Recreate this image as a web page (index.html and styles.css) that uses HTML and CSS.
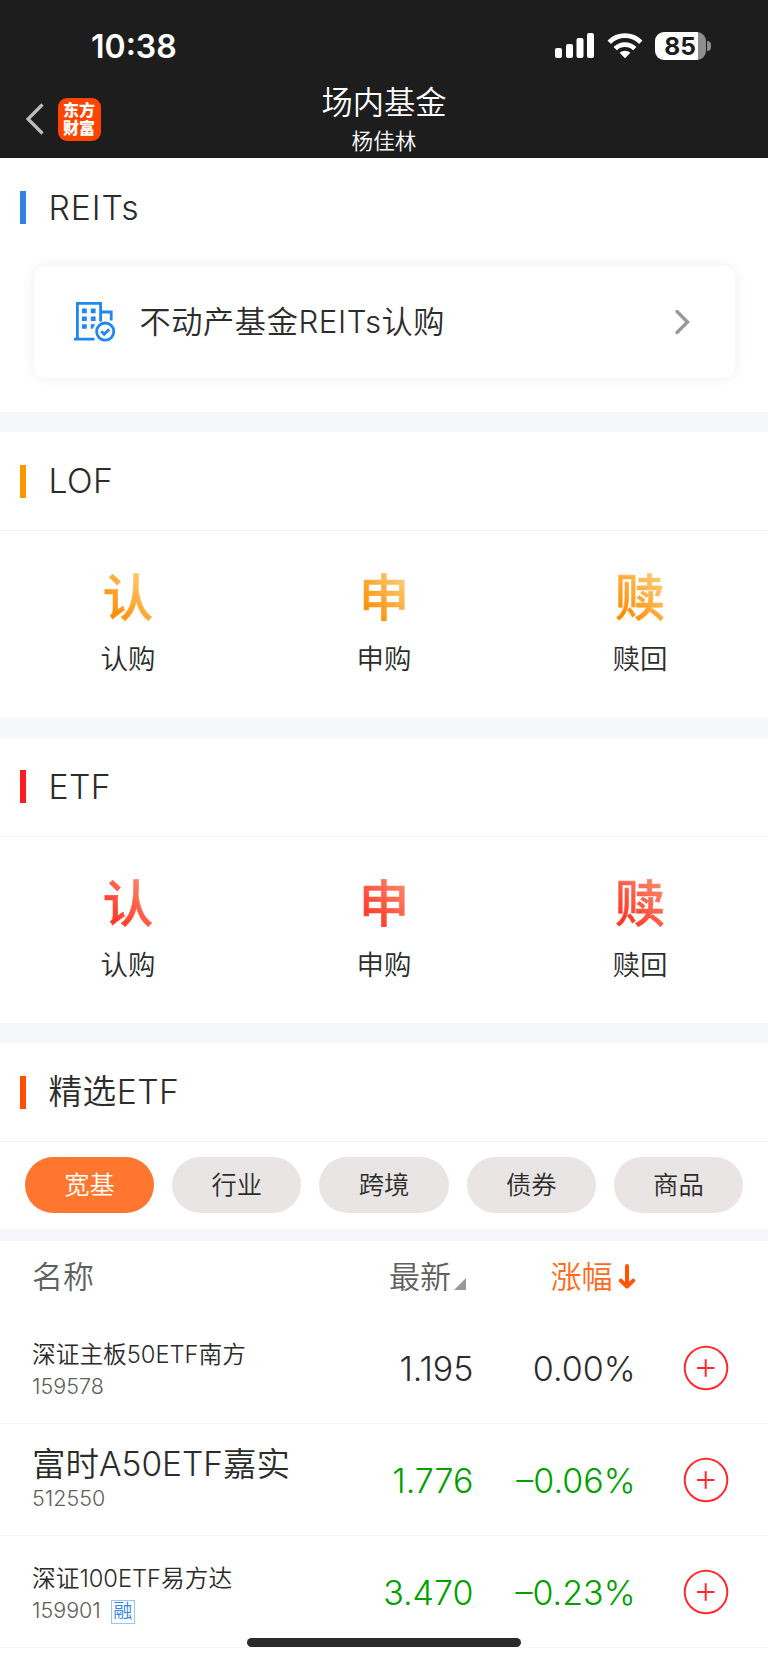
FILE: index.html
```
<!DOCTYPE html>
<html lang="zh-CN">
<head>
  <meta charset="UTF-8" />
  <meta name="viewport" content="width=device-width, initial-scale=1.0"/>
  <title>场内基金</title>
  <link rel="stylesheet" href="styles.css">
</head>
<body>

  <header class="header">
    <!-- Status bar -->
    <div class="status">
      <span class="time">10:38</span>
      <div class="status-icons">
        <svg class="signal" width="40" height="26" viewBox="0 0 40 26" fill="#fff">
          <rect x="0" y="15" width="7" height="10" rx="2"/>
          <rect x="11" y="11" width="7" height="14" rx="2"/>
          <rect x="21.5" y="5" width="7" height="20" rx="2"/>
          <rect x="32" y="0" width="7" height="25" rx="2"/>
        </svg>
        <svg class="wifi" width="36" height="26" viewBox="0 0 36 26">
          <g fill="none" stroke="#fff" stroke-width="4.8">
            <path d="M2.2 9.2A22.5 22.5 0 0 1 33.8 9.2"/>
            <path d="M8.2 15.6A14 14 0 0 1 27.8 15.6"/>
          </g>
          <path d="M18 25.2L12.6 19.8A7.8 7.8 0 0 1 23.4 19.8Z" fill="#fff"/>
        </svg>
        <div class="battery"><span class="battery-body">85</span><span class="battery-cap"></span></div>
      </div>
    </div>
    <!-- Nav bar -->
    <div class="nav">
      <div class="nav-left">
        <svg width="20" height="34" viewBox="0 0 20 34" fill="none" stroke="#bdbdbd" stroke-width="3.2">
          <path d="M17.5 2.5L3 17L17.5 31.5"/>
        </svg>
        <div class="logo"><span>东方</span><span>财富</span></div>
      </div>
      <div class="nav-title">
        <h1>场内基金</h1>
        <p>杨佳林</p>
      </div>
    </div>
  </header>

  <section class="section reits">
    <h2 class="title blue">REITs</h2>
    <a class="card">
      <svg width="42" height="42" viewBox="0 0 42 42" fill="none" stroke="#1e87f0" stroke-width="2.8">
        <path d="M3.4 37V2.3H26.6V20.5M26.6 11H37.2V19.5M0 38.2H20.5"/>
        <g fill="#1e87f0" stroke="none">
          <path d="M8 7.6h4.8v4.6H8zM16.8 7.6h4.8v4.6h-4.8zM8 15.4h4.8v4.6H8zM16.8 15.4h4.8v4.6h-4.8zM8 23.2h4.8v4.6H8zM16.8 23.2h4.4l-2.6 4.6h-1.8z"/>
        </g>
        <circle cx="31.2" cy="30.6" r="8.6"/>
        <path d="M27.2 30.2l3 3 5-5"/>
      </svg>
      <span class="card-text">不动产基金REITs认购</span>
      <svg class="arrow" width="16" height="28" viewBox="0 0 16 28" fill="none" stroke="#999" stroke-width="3.4" stroke-linecap="round">
        <path d="M3 3.5L13.5 14L3 24.5"/>
      </svg>
    </a>
  </section>

  <section class="section">
    <h2 class="title orange line">LOF</h2>
    <div class="menu lof">
      <div class="menu-item"><b>认</b><span>认购</span></div>
      <div class="menu-item"><b>申</b><span>申购</span></div>
      <div class="menu-item"><b>赎</b><span>赎回</span></div>
    </div>
  </section>

  <section class="section">
    <h2 class="title red line">ETF</h2>
    <div class="menu etf">
      <div class="menu-item"><b>认</b><span>认购</span></div>
      <div class="menu-item"><b>申</b><span>申购</span></div>
      <div class="menu-item"><b>赎</b><span>赎回</span></div>
    </div>
  </section>

  <section class="section picks">
    <h2 class="title deep line">精选ETF</h2>
    <div class="tabs">
      <span class="tab active">宽基</span>
      <span class="tab">行业</span>
      <span class="tab">跨境</span>
      <span class="tab">债券</span>
      <span class="tab">商品</span>
    </div>
  </section>

  <!-- Fund list -->
  <div class="list">
    <div class="list-head">
      <span>名称</span>
      <span class="col-price">最新<i class="corner"></i></span>
      <span class="col-change">涨幅<svg width="18" height="27" viewBox="0 0 18 27" fill="none" stroke="#ff5500" stroke-width="4" stroke-linecap="round" stroke-linejoin="round"><path d="M9 3V23M2.8 17.6L9 23.5L15.2 17.6"/></svg></span>
    </div>

    <div class="row">
      <div class="fund"><span class="name">深证主板50ETF南方</span><span class="code">159578</span></div>
      <span class="num">1.195</span>
      <span class="num">0.00%</span>
      <svg class="add" width="46" height="46" viewBox="0 0 46 46"><circle cx="23" cy="23" r="21.3"/><path d="M14 23H31.5M22.7 14.2V31.8"/></svg>
    </div>
    <div class="row down">
      <div class="fund"><span class="name big">富时A50ETF嘉实</span><span class="code">512550</span></div>
      <span class="num">1.776</span>
      <span class="num">–0.06%</span>
      <svg class="add" width="46" height="46" viewBox="0 0 46 46"><circle cx="23" cy="23" r="21.3"/><path d="M14 23H31.5M22.7 14.2V31.8"/></svg>
    </div>
    <div class="row down">
      <div class="fund"><span class="name">深证100ETF易方达</span><span class="code">159901<em class="tag">融</em></span></div>
      <span class="num">3.470</span>
      <span class="num">–0.23%</span>
      <svg class="add" width="46" height="46" viewBox="0 0 46 46"><circle cx="23" cy="23" r="21.3"/><path d="M14 23H31.5M22.7 14.2V31.8"/></svg>
    </div>
  </div>

  <div class="home-bar"></div>

</body>
</html>
```

FILE: styles.css
```
/* Reset & Base */
* { margin:0; padding:0; box-sizing:border-box; }
body {
  font-family:Inter,"Noto Sans CJK SC",sans-serif;
  font-weight:350;
  color:#2c2c2c;
  background:#fff;
  height:1662px;
  overflow:hidden;
}
svg { display:block; flex:none; }

/* Header */
.header { height:158px; background:#1d1d1d; color:#fff; }
.status {
  height:80px; padding:12px 57.5px 0 91px;
  display:flex; align-items:center; justify-content:space-between;
}
.time { padding-top:2px; font-size:32px; font-weight:600; line-height:66px; }
.status-icons { display:flex; align-items:center; }
.wifi { margin:0 12px; }
.battery { display:flex; align-items:center; gap:1px; }
.battery-body {
  width:51px; height:28px; border-radius:9px;
  background:linear-gradient(90deg,#fff 84%,#8e8e8e 84%);
  color:#1d1d1d; font-size:24.5px; font-weight:700;
  line-height:28px; text-align:center;
}
.battery-cap { width:4px; height:10px; border-radius:0 5px 5px 0; background:#8e8e8e; }

.nav {
  height:78px; padding:0 25px;
  display:grid; grid-template-columns:1fr auto 1fr;
}
.nav-left { display:flex; align-items:center; gap:12.5px; }
.logo {
  width:43px; height:43px; border-radius:9px; background:#ff4400;
  display:flex; flex-direction:column; justify-content:center;
  font-size:16px; font-weight:900; line-height:18px; text-align:center;
}
.nav-title { text-align:center; }
.nav-title h1 { font-size:31.3px; font-weight:350; line-height:46px; }
.nav-title p { font-size:21.6px; line-height:30px; }

/* Sections */
.section { height:305.5px; border-bottom:20px solid #f6f7fa; }
.title {
  height:98px; padding-left:20px;
  display:flex; align-items:center; gap:22.5px;
  font-size:33.7px; font-weight:350; line-height:40px; letter-spacing:.4px;
}
.title::before { content:""; width:6px; height:33px; background:#3480e4; }
.title.orange::before { background:#ff9800; }
.title.red::before { background:#fb1d22; }
.title.deep::before { background:#ff5000; }
.line { height:99px; border-bottom:1px solid #f3f4f6; }

/* REITs card */
.reits { height:274px; }
.reits .title { height:99px; letter-spacing:.9px; }
.card {
  height:112px; margin:9px 33.5px 0; padding:0 45px 0 40px;
  display:flex; align-items:center;
  border-radius:11px;
  box-shadow:0 0 14px rgba(0,0,0,0.07);
}
.card-text { margin-left:24px; font-size:31.2px; line-height:42px; letter-spacing:.6px; }
.arrow { margin-left:auto; }

/* LOF / ETF menus */
.menu { display:grid; grid-template-columns:repeat(3,1fr); padding-top:37px; }
.menu-item { display:flex; flex-direction:column; align-items:center; }
.menu-item b {
  font-size:50.5px; font-weight:500; line-height:60px;
  color:transparent; -webkit-background-clip:text; background-clip:text;
}
.menu-item span { margin-top:11px; font-size:27.5px; line-height:40px; }
.lof b { background-image:linear-gradient(45deg,#ff8c00 20%,#ffcf7d 90%); -webkit-text-stroke:.6px transparent; }
.etf b { background-image:linear-gradient(45deg,#ff3526 20%,#ff8a6c 90%); -webkit-text-stroke:.6px transparent; }

/* Tabs */
.picks { height:198px; border-bottom-width:12px; }
.tabs { display:flex; gap:18px; padding:15px 25px; }
.tab {
  flex:1; height:56px; border-radius:28px;
  background:#e9e5e4;
  font-size:25.3px; line-height:55px; text-align:center;
}
.tab.active { background:#ff762e; color:#fff; }

/* Fund list */
.list-head, .row {
  display:grid; grid-template-columns:291px 149px 162px 1fr;
  align-items:center; padding-left:32px;
}
.list-head { height:71px; font-size:31px; line-height:44px; color:#606060; white-space:nowrap; }
.col-price, .col-change { display:flex; align-items:center; }
.col-price { padding-left:66px; }
.col-change { padding-left:78.5px; gap:5px; color:#ff6a1c; }
.corner {
  margin:14px 0 0 3px;
  border-left:12px solid transparent; border-bottom:12px solid #999;
}
.row { height:112px; border-bottom:1px solid #f7f7f8; }
.fund { height:111px; padding-bottom:24px; display:flex; flex-direction:column; justify-content:flex-end; }
.name { font-size:23.7px; line-height:36px; white-space:nowrap; }
.name.big { font-size:33.5px; line-height:42px; }
.code { font-size:21.5px; line-height:26px; height:26px; color:#5e5e5e; display:flex; align-items:center; }
.tag {
  width:24px; height:24px; margin:3px 0 0 10px;
  border:1px solid #9ac5f7; color:#3585e6;
  font-size:19px; font-style:normal; line-height:21px; text-align:center;
}
.num { margin-right:-1.5px; padding-top:1px; font-size:34px; text-align:right; }
.down .num { color:#00a000; }
.add { margin-left:48.5px; fill:none; stroke:#ff2a2f; stroke-width:2; }

.home-bar {
  position:absolute; left:247px; top:1638px;
  width:274px; height:9px; border-radius:5px; background:#2a2a2a;
}
```
